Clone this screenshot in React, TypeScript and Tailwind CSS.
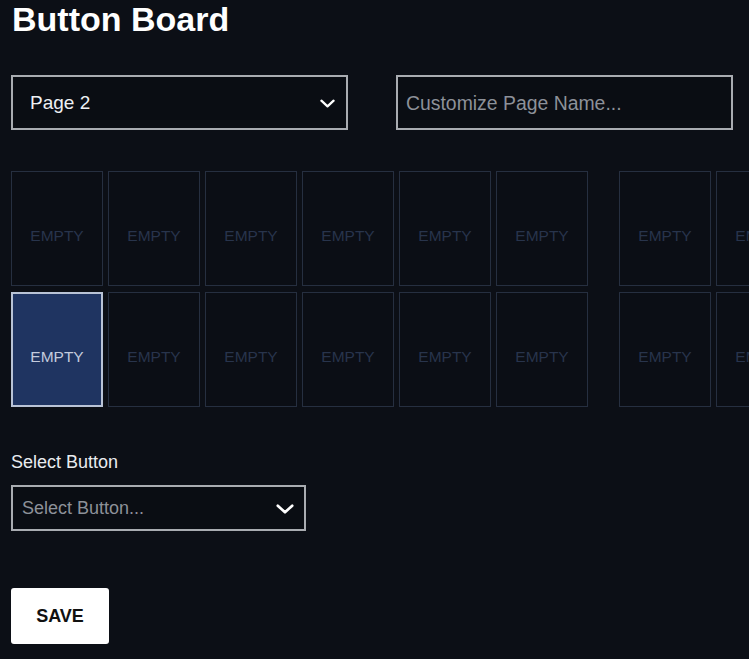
import React from "react";

const Chevron = ({ w, h }: { w: number; h: number }) => (
  <svg width={w} height={h} viewBox="0 0 16 9" fill="none">
    <path d="M1.5 1.5 L8 7.5 L14.5 1.5" stroke="#ffffff" strokeWidth="2.4" strokeLinecap="round" strokeLinejoin="round" />
  </svg>
);

function Cell({ selected }: { selected?: boolean }) {
  return (
    <div
      className={
        "w-[92px] h-[115px] flex items-center justify-center pt-[14px] " +
        (selected
          ? "bg-[#1f3461] border-2 border-[#b9c3d6]"
          : "bg-[#0b0e15] border border-[#262f40]")
      }
    >
      <span
        className={
          "text-[15.5px] " + (selected ? "text-[#c3cbdd]" : "text-[#28344c]")
        }
      >
        EMPTY
      </span>
    </div>
  );
}

function Group({ first }: { first?: boolean }) {
  const cells = Array.from({ length: 12 });
  return (
    <div className="grid grid-cols-[repeat(6,92px)] grid-rows-[repeat(2,115px)] gap-x-[5px] gap-y-[6px] shrink-0">
      {cells.map((_, i) => (
        <Cell key={i} selected={first && i === 6} />
      ))}
    </div>
  );
}

export default function App() {
  return (
    <div
      className="w-[749px] h-[659px] bg-[#0c0f16] overflow-hidden pl-[11px] text-white"
      style={{ fontFamily: '"Liberation Sans", Arial, sans-serif' }}
    >
      <h1 className="text-[34px] leading-[34px] font-bold mt-[2px] pl-[1px] text-white">
        Button Board
      </h1>

      <div className="flex gap-[48px] mt-[39px] w-[722px]">
        <div className="w-[337px] h-[55px] border-2 border-[#a9acb1] flex items-center justify-between pl-[17px] pr-[11px] pt-[1px] bg-[#0a0d13]">
          <span className="text-[19px] text-[#eef0f3]">Page 2</span>
          <Chevron w={15} h={9} />
        </div>
        <div className="w-[337px] h-[55px] border-2 border-[#a9acb1] flex items-center pl-[8px] pt-[2px] bg-[#0a0d13]">
          <span className="text-[19.4px] text-[#8d9199]">Customize Page Name...</span>
        </div>
      </div>

      <div className="flex gap-[31px] mt-[41px] overflow-hidden">
        <Group first />
        <Group />
      </div>

      <div className="mt-[44px] text-[18px] leading-[22px] text-[#e9ecf0]">Select Button</div>

      <div className="mt-[12px] w-[295px] h-[46px] border-2 border-[#a9acb1] flex items-center justify-between pl-[9px] pr-[10px] pt-[1px] bg-[#0a0d13]">
        <span className="text-[18px] text-[#8d9199]">Select Button...</span>
        <Chevron w={18} h={10} />
      </div>

      <button className="mt-[57px] w-[98px] h-[56px] bg-white rounded-[3px] flex items-center justify-center">
        <span className="text-[18px] font-bold text-[#111]">SAVE</span>
      </button>
    </div>
  );
}
